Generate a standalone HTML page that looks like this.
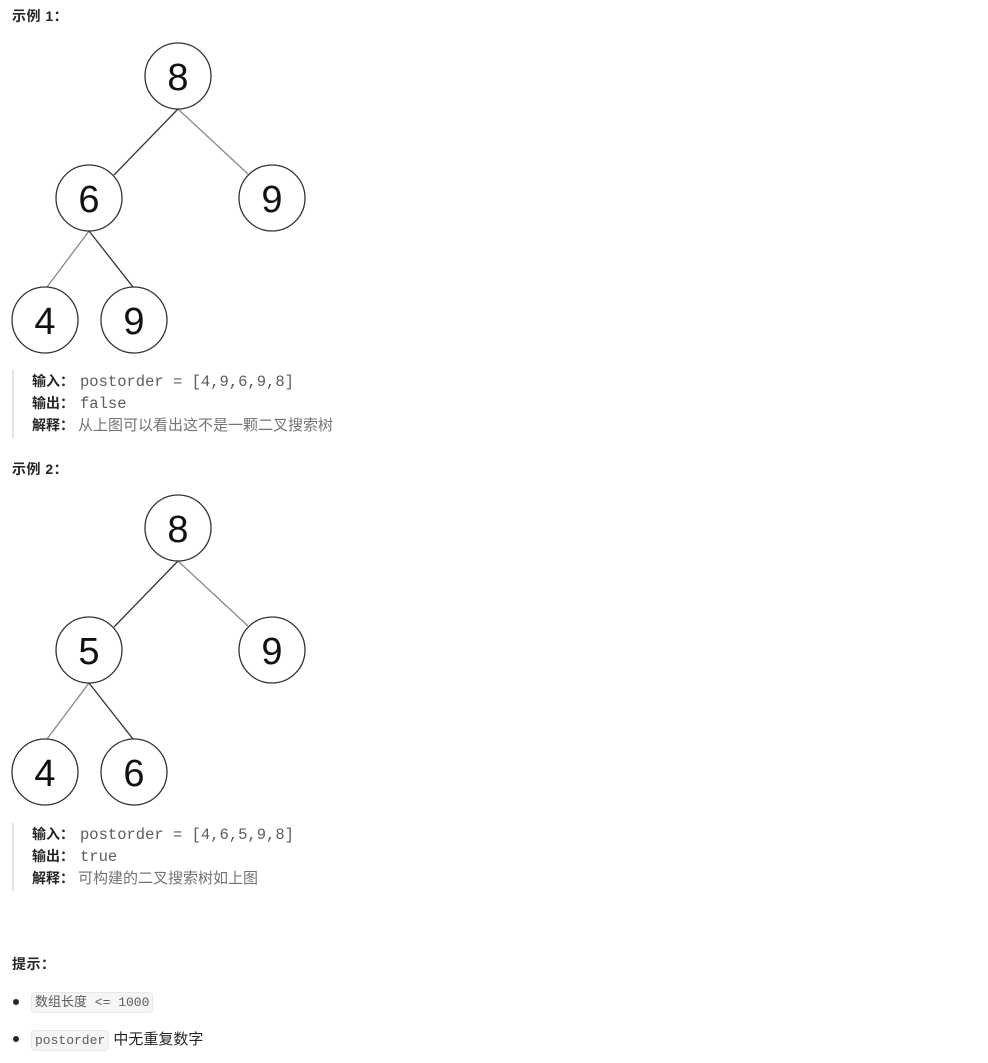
<!DOCTYPE html><html><head><meta charset="utf-8"><style>
body{margin:0;width:988px;height:1063px;background:#fff;font-family:"Liberation Sans","Noto Sans CJK SC",sans-serif;color:#262626;position:relative}
.a{position:absolute;white-space:nowrap}
.h{font-size:14px;font-weight:bold;color:#262626;letter-spacing:0.5px}
.q{position:absolute;left:12px;border-left:2px solid #e5e5e5;padding-left:18px;font-size:14px;line-height:22px;height:68px}
.q div{height:22px;line-height:22px}
.q b{color:#262626;display:inline-block;width:48px}
.m{font-family:"Liberation Mono",monospace;color:#5c5c5c;font-size:15.5px}
.g{color:#737373;font-size:15px;margin-left:-2px}
code{font-family:"Liberation Mono",monospace;font-size:13px;color:#5c5c5c;background:#f5f5f5;border:1px solid #e8e8e8;border-radius:4px;padding:2px 3px}
.dot{position:absolute;left:13px;width:6px;height:6px;border-radius:50%;background:#262626}
svg text{font-family:"Liberation Sans",sans-serif;font-size:38px}
</style></head><body>
<div class="a h" style="left:12px;top:6px">示例 1：</div>
<svg class="a" style="left:0;top:0" width="320" height="360">
<g stroke-width="1.3"><line x1="178" y1="109" x2="114" y2="175" stroke="#333"/><line x1="178" y1="109" x2="248" y2="174" stroke="#888"/><line x1="89" y1="231" x2="47" y2="287" stroke="#888"/><line x1="89" y1="231" x2="133" y2="287" stroke="#333"/></g>
<g fill="#fff" stroke="#333" stroke-width="1.3"><circle cx="178" cy="76" r="33"/><circle cx="89" cy="198" r="33"/><circle cx="272" cy="198" r="33"/><circle cx="45" cy="320" r="33"/><circle cx="134" cy="320" r="33"/></g>
<g text-anchor="middle" fill="#111"><text x="178" y="90">8</text><text x="89" y="212">6</text><text x="272" y="212">9</text><text x="45" y="334">4</text><text x="134" y="334">9</text></g>
</svg>
<div class="q" style="top:370px"><div><b>输入：</b><span class="m">postorder = [4,9,6,9,8]</span></div><div><b>输出：</b><span class="m">false</span></div><div><b>解释：</b><span class="g">从上图可以看出这不是一颗二叉搜索树</span></div></div>
<div class="a h" style="left:12px;top:459px">示例 2：</div>
<svg class="a" style="left:0;top:452px" width="320" height="360">
<g stroke-width="1.3"><line x1="178" y1="109" x2="114" y2="175" stroke="#333"/><line x1="178" y1="109" x2="248" y2="174" stroke="#888"/><line x1="89" y1="231" x2="47" y2="287" stroke="#888"/><line x1="89" y1="231" x2="133" y2="287" stroke="#333"/></g>
<g fill="#fff" stroke="#333" stroke-width="1.3"><circle cx="178" cy="76" r="33"/><circle cx="89" cy="198" r="33"/><circle cx="272" cy="198" r="33"/><circle cx="45" cy="320" r="33"/><circle cx="134" cy="320" r="33"/></g>
<g text-anchor="middle" fill="#111"><text x="178" y="90">8</text><text x="89" y="212">5</text><text x="272" y="212">9</text><text x="45" y="334">4</text><text x="134" y="334">6</text></g>
</svg>
<div class="q" style="top:823px"><div><b>输入：</b><span class="m">postorder = [4,6,5,9,8]</span></div><div><b>输出：</b><span class="m">true</span></div><div><b>解释：</b><span class="g">可构建的二叉搜索树如上图</span></div></div>
<div class="a h" style="left:12px;top:954px">提示：</div>
<div class="dot" style="top:999px"></div>
<div class="a" style="left:31px;top:991px;font-size:13px"><code>数组长度 &lt;= 1000</code></div>
<div class="dot" style="top:1036px"></div>
<div class="a" style="left:31px;top:1028px;font-size:15px"><code>postorder</code> 中无重复数字</div>
</body></html>
